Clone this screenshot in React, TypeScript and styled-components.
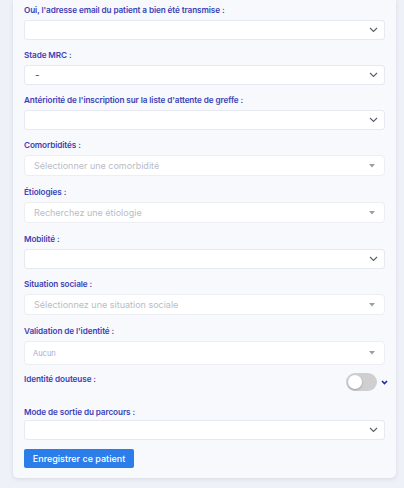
import React from "react";
import styled, { createGlobalStyle } from "styled-components";

const Global = createGlobalStyle`
  body {
    margin: 0;
    background: #eff1f8;
    font-family: Inter, "Open Sans", sans-serif;
  }
`;

const Chevron = () => (
  <svg width="9" height="6" viewBox="0 0 9 6">
    <path d="M1 1 L4.5 4.5 L8 1" fill="none" stroke="#5a5f6b" strokeWidth="1.1" />
  </svg>
);

const Caret = () => (
  <svg width="6" height="4" viewBox="0 0 6 4">
    <path d="M0 0 H6 L3 3.5 Z" fill="#9a9ea8" />
  </svg>
);

const fields: { label: string; kind: "native" | "search"; value?: string; placeholder?: string; small?: boolean }[] = [
  { label: "Oui, l'adresse email du patient a bien été transmise :", kind: "native" },
  { label: "Stade MRC :", kind: "native", value: "-" },
  { label: "Antériorité de l'inscription sur la liste d'attente de greffe :", kind: "native" },
  { label: "Comorbidités :", kind: "search", placeholder: "Sélectionner une comorbidité" },
  { label: "Étiologies :", kind: "search", placeholder: "Recherchez une étiologie" },
  { label: "Mobilité :", kind: "native" },
  { label: "Situation sociale :", kind: "search", placeholder: "Sélectionnez une situation sociale" },
  { label: "Validation de l'identité :", kind: "search", placeholder: "Aucun", small: true },
];

export default function App() {
  return (
    <>
      <Global />
      <S.Page>
        <S.Card>
          {fields.map((f) => (
            <S.Field key={f.label} $search={f.kind === "search"}>
              <S.Label>{f.label}</S.Label>
              {f.kind === "native" ? (
                <S.NativeSelect>
                  <S.Value>{f.value}</S.Value>
                  <Chevron />
                </S.NativeSelect>
              ) : (
                <S.SearchSelect $tall={f.small}>
                  <S.Placeholder $small={f.small}>{f.placeholder}</S.Placeholder>
                  <Caret />
                </S.SearchSelect>
              )}
            </S.Field>
          ))}
          <S.ToggleRow>
            <S.Label>Identité douteuse :</S.Label>
            <S.ToggleWrap>
              <S.Toggle>
                <S.Knob />
              </S.Toggle>
              <svg width="7" height="5" viewBox="0 0 7 5">
                <path d="M1 1 L3.5 3.5 L6 1" fill="none" stroke="#1f2a9c" strokeWidth="1.6" />
              </svg>
            </S.ToggleWrap>
          </S.ToggleRow>
          <S.Field $last>
            <S.Label>Mode de sortie du parcours :</S.Label>
            <S.NativeSelect>
              <S.Value />
              <Chevron />
            </S.NativeSelect>
          </S.Field>
          <S.Button>Enregistrer ce patient</S.Button>
        </S.Card>
      </S.Page>
    </>
  );
}

const S = {
  Page: styled.div`
    padding: 0 8px 10px 13px;
    width: 404px;
    box-sizing: border-box;
  `,

  Card: styled.div`
    background: #f8f9fc;
    border-radius: 0 0 5px 5px;
    box-shadow: 0 1px 4px rgba(40, 50, 90, 0.12);
    padding: 4px 11px 10px;
  `,

  Field: styled.div<{ $search?: boolean; $last?: boolean }>`
    display: flex;
    flex-direction: column;
    gap: ${(p) => (p.$last ? "2px" : "4px")};
    margin-bottom: ${(p) => (p.$search ? "10px" : "9px")};
  `,

  Label: styled.div`
    font-size: 8.2px;
    letter-spacing: -0.1px;
    line-height: 12px;
    font-weight: 600;
    color: #3b41b6;
  `,

  NativeSelect: styled.div`
    height: 20px;
    box-sizing: border-box;
    background: #fff;
    border: 1px solid #e6e8f2;
    border-radius: 3px;
    display: flex;
    align-items: center;
    justify-content: space-between;
    padding: 0 6px 0 10px;
  `,

  Value: styled.span`
    font-size: 10px;
    color: #444;
  `,

  SearchSelect: styled.div<{ $tall?: boolean }>`
    height: ${(p) => (p.$tall ? "24px" : "21px")};
    box-sizing: border-box;
    background: #fff;
    border: 1px solid #eceef3;
    border-radius: 4px;
    display: flex;
    align-items: center;
    justify-content: space-between;
    padding: 0 9px 0 8px;
  `,

  Placeholder: styled.span<{ $small?: boolean }>`
    font-size: ${(p) => (p.$small ? "7.5px" : "9px")};
    color: ${(p) => (p.$small ? "#a6aadb" : "#b9bcc5")};
    padding-left: ${(p) => (p.$small ? "0" : "1px")};
  `,

  ToggleRow: styled.div`
    display: flex;
    justify-content: space-between;
    align-items: flex-start;
    margin-top: -2px;
    margin-bottom: 15px;
  `,

  ToggleWrap: styled.div`
    display: flex;
    align-items: center;
    gap: 4px;
    margin-right: -3px;
  `,

  Toggle: styled.div`
    width: 31px;
    height: 18px;
    border-radius: 9px;
    background: #cfcfd1;
    display: flex;
    align-items: center;
    padding: 0 2px;
    box-sizing: border-box;
  `,

  Knob: styled.div`
    width: 14px;
    height: 14px;
    border-radius: 50%;
    background: #fff;
    box-shadow: 0 1px 2px rgba(0, 0, 0, 0.25);
  `,

  Button: styled.button`
    display: block;
    border: none;
    background: #2b7de9;
    color: #fff;
    font-family: inherit;
    font-size: 9px;
    font-weight: 500;
    height: 19px;
    width: 110px;
    border-radius: 2px;
    padding: 0;
  `,
};
